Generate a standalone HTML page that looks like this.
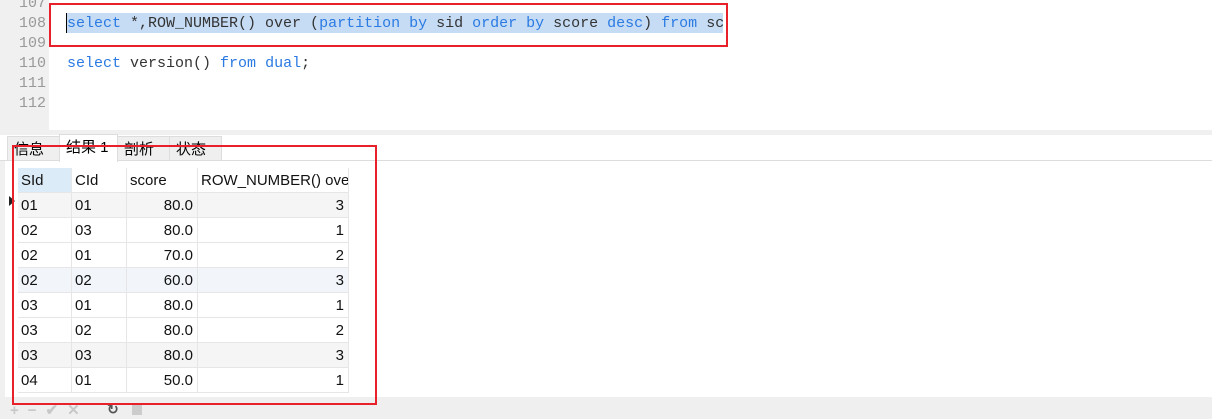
<!DOCTYPE html>
<html><head><meta charset="utf-8"><style>
body{margin:0;width:1212px;height:419px;background:#fff;position:relative;overflow:hidden;font-family:"Liberation Sans","Noto Sans CJK SC",sans-serif}
.abs{position:absolute}
.gut{left:0;top:0;width:49px;height:130px;background:#f0f0f0}
.ln{position:absolute;left:0;width:46px;text-align:right;font:15px "Liberation Mono",monospace;color:#999}
.code{position:absolute;left:67px;font:15px "Liberation Mono",monospace;color:#333;white-space:pre}
.k{color:#2a7ae2}
.sep{left:0;top:130px;width:1212px;height:5px;background:#f0f0f0}
.tab{position:absolute;top:136px;height:25px;font-size:15px;line-height:26px;background:#efefef;border:1px solid #ddd;box-sizing:border-box;padding-left:6px}
.cell{position:absolute;height:25px;line-height:25px;font-size:15px;box-sizing:border-box;border-right:1px solid #e6e6e6;border-bottom:1px solid #e6e6e6;padding:0 3px;color:#111}
.r{text-align:right;padding-right:4px}
.red{border:2px solid #e8202a;box-sizing:border-box}
</style></head><body>
<div class="abs gut"></div>
<div class="ln" style="top:-5px">107</div>
<div class="ln" style="top:15px">108</div>
<div class="ln" style="top:35px">109</div>
<div class="ln" style="top:55px">110</div>
<div class="ln" style="top:75px">111</div>
<div class="ln" style="top:95px">112</div>
<div class="abs" style="left:67px;top:13px;width:656px;height:20px;background:#c6dcf5"></div>
<div class="abs" style="left:66px;top:13px;width:1px;height:20px;background:#000"></div>
<div class="code" style="top:15px"><span class="k">select</span> *,ROW_NUMBER() over (<span class="k">partition by</span> sid <span class="k">order by</span> score <span class="k">desc</span>) <span class="k">from</span> sc</div>
<div class="code" style="top:55px"><span class="k">select</span> version() <span class="k">from</span> <span class="k">dual</span>;</div>
<div class="abs sep"></div>
<div class="abs" style="left:0;top:135px;width:1212px;height:26px;background:#fff"></div>
<div class="abs" style="left:0;top:160px;width:1212px;height:1px;background:#ddd"></div>
<div class="tab" style="left:7px;width:53px">信息</div>
<div class="tab" style="left:59px;width:59px;top:134px;height:28px;background:#fff;border-bottom:none">结果 1</div>
<div class="tab" style="left:117px;width:53px">剖析</div>
<div class="tab" style="left:169px;width:53px">状态</div>
<div class="abs" style="left:0;top:161px;width:5px;height:236px;background:#f0f0f0"></div>
<div id="t"></div>
<div class="abs" style="left:0;top:397px;width:1212px;height:22px;background:#efefef"></div>
<div class="abs" style="left:10px;top:401px;font-size:15px;color:#c8c8c8;letter-spacing:9px;font-weight:bold">+−✔✕</div>
<div class="abs" style="left:107px;top:401px;font-size:14px;color:#555;font-weight:bold">↻</div>
<div class="abs" style="left:132px;top:405px;width:10px;height:10px;background:#ccc"></div>
<div class="abs" style="left:9px;top:196px;width:0;height:0;border-left:6px solid #222;border-top:5px solid transparent;border-bottom:5px solid transparent"></div>
<div class="abs red" style="left:49px;top:3px;width:679px;height:44px"></div>
<div class="abs red" style="left:12px;top:145px;width:365px;height:260px"></div>
<script>
var cols=[[18,54],[72,55],[127,71],[198,151]];
var hdr=["SId","CId","score","ROW_NUMBER() ove"];
var rows=[["01","01","80.0","3"],["02","03","80.0","1"],["02","01","70.0","2"],["02","02","60.0","3"],["03","01","80.0","1"],["03","02","80.0","2"],["03","03","80.0","3"],["04","01","50.0","1"]];
var h="";
hdr.forEach(function(t,i){h+='<div class="cell" style="left:'+cols[i][0]+'px;top:168px;width:'+cols[i][1]+'px;background:'+(i==0?'#dcebf8':'#fff')+';overflow:hidden;white-space:nowrap">'+t+'</div>';});
rows.forEach(function(r,j){var bg=j==0||j==6?'#f5f5f5':(j==3?'#f2f6fb':'#fff');
r.forEach(function(t,i){h+='<div class="cell'+(i>=2?' r':'')+'" style="left:'+cols[i][0]+'px;top:'+(193+25*j)+'px;width:'+cols[i][1]+'px;background:'+bg+'">'+t+'</div>';});});
document.getElementById('t').innerHTML=h;
</script>
</body></html>
